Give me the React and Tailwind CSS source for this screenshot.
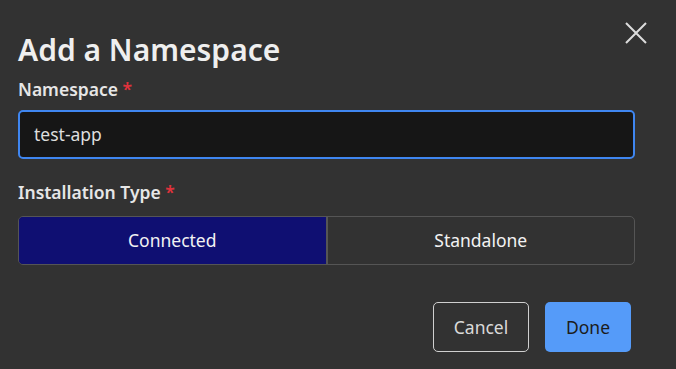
import React from "react";

export default function App() {
  return (
    <div
      className="w-[676px] h-[369px] bg-[#323232] text-[#ececec] relative overflow-hidden"
      style={{ fontFamily: '"Noto Sans", "Open Sans", sans-serif' }}
    >
      {/* Close */}
      <button className="absolute left-[625px] top-[22px] w-[22px] h-[22px]">
        <svg viewBox="0 0 22 22" className="w-[22px] h-[22px]">
          <path d="M1 1 L21 21 M21 1 L1 21" stroke="#dcdcdc" strokeWidth="2" fill="none" />
        </svg>
      </button>

      <div className="pl-[18px] pr-[41px] pt-[30px]">
        <h1 className="text-[30px] leading-[40px] font-semibold text-[#efefef]">Add a Namespace</h1>

        <label className="block mt-[7px] text-[17.5px] leading-[24px] font-semibold text-[#e6e6e6]">
          Namespace <span className="text-[#e0323c]">*</span>
        </label>
        <div className="mt-[9px] h-[49px] rounded-[5px] border-2 border-[#3f86f0] bg-[#161616] flex items-center px-[14px]">
          <span className="text-[17.5px] text-[#dedede]">test-app</span>
        </div>

        <label className="block mt-[21px] text-[17.5px] leading-[24px] font-semibold text-[#e6e6e6]">
          Installation Type <span className="text-[#e0323c]">*</span>
        </label>
        <div className="mt-[12px] h-[49px] rounded-[5px] border border-[#555555] flex overflow-hidden">
          <div className="flex-1 bg-[#0f0f72] border-r-2 border-[#555555] flex items-center justify-center text-[17.5px] text-[#f2f2f2]">
            Connected
          </div>
          <div className="flex-1 flex items-center justify-center text-[17.5px] text-[#f2f2f2]">
            Standalone
          </div>
        </div>

        <div className="mt-[37px] flex justify-end gap-[16px] pr-[4px]">
          <button className="w-[96px] h-[50px] rounded-[5px] border border-[#d0d0d0] text-[17.5px] text-[#dadada]">
            Cancel
          </button>
          <button className="w-[86px] h-[50px] rounded-[5px] bg-[#559bf9] text-[17.5px] text-[#1c1c1c]">
            Done
          </button>
        </div>
      </div>
    </div>
  );
}
